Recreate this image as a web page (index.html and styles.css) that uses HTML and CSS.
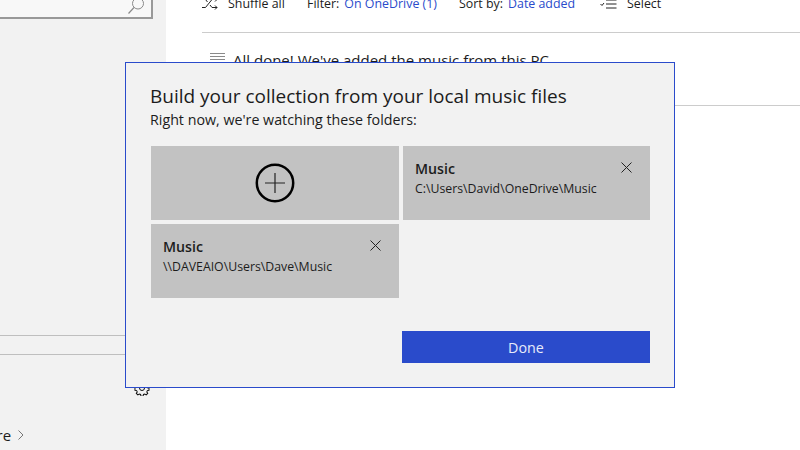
FILE: index.html
```html
<!DOCTYPE html>
<html lang="en">
<head>
<meta charset="utf-8">
<title>Music</title>
<link rel="stylesheet" href="styles.css">
</head>
<body>
<div class="app">
  <aside class="sidebar">
    <div class="search">
      <svg class="search-icon" viewBox="0 0 18 18" width="18" height="18"><circle cx="11" cy="6.500" r="5.500" fill="none" stroke="#8a8a8a" stroke-width="1"/><path d="M7 10.500L1.500 16.500" stroke="#8a8a8a" stroke-width="1.200" fill="none"/></svg>
    </div>
    <div class="side-fill"></div>
    <div class="side-line"></div>
    <div class="side-row">
      <svg class="gear" viewBox="0 0 16 16" width="16" height="16"><path d="M6.700 1h2.600l.4 2 1.500.7 1.800-1.100 1.800 1.800-1.100 1.800.6 1.500 2 .4v2.600l-2 .4-.6 1.500 1.100 1.800-1.800 1.800-1.800-1.100-1.500.6-.4 2H6.700l-.4-2-1.500-.6-1.800 1.100-1.800-1.800 1.100-1.800-.7-1.500-2-.4V7.100l2-.4.7-1.500-1.100-1.800 1.800-1.800 1.800 1.100 1.500-.7z" fill="none" stroke="#111" stroke-width="1.200" transform="translate(1.300 1.300) scale(.84)"/><circle cx="8" cy="8" r="2.500" fill="none" stroke="#111"/></svg>
    </div>
    <div class="store">
      <span>Store</span>
      <svg viewBox="0 0 6 10" width="6" height="10"><path d="M.5.500L5 5 .5 9.500" fill="none" stroke="#777" stroke-width="1"/></svg>
    </div>
  </aside>
  <main class="main">
    <div class="toolbar">
      <div class="tool tool-shuffle">
        <svg viewBox="0 0 16 14" width="16" height="14"><path d="M0 10.500h3.500L10 2.500h5M0 2.500h3.500l2 2.500M8 8l2 2.500h5M13 .5l2 2-2 2M13 8.500l2 2-2 2" fill="none" stroke="#222" stroke-width="1"/></svg>
        <span>Shuffle all</span>
      </div>
      <div class="tool tool-filter"><span>Filter:</span><span class="link">On OneDrive (1)</span></div>
      <div class="tool tool-sort"><span>Sort by:</span><span class="link">Date added</span></div>
      <div class="tool tool-select">
        <svg viewBox="0 0 17 10" width="17" height="10"><path d="M.5 5l1.500 1.500L4 4M6 1h10.500M6 5h10.500M6 9h10.500" fill="none" stroke="#222" stroke-width="1"/></svg>
        <span>Select</span>
      </div>
    </div>
    <div class="notice">
      <svg viewBox="0 0 16 14" width="16" height="14"><path d="M0 .5h15M0 3.500h15M0 6.500h15M0 9.500h9M0 12.500h9M11 12.500h4v-3" fill="none" stroke="#8a8a8a" stroke-width="1"/></svg>
      <span>All done! We've added the music from this PC</span>
    </div>
  </main>
</div>
<section class="dialog">
  <h1>Build your collection from your local music files</h1>
  <p class="sub">Right now, we're watching these folders:</p>
  <div class="grid">
    <button class="card add" type="button">
      <svg viewBox="0 0 40 40" width="40" height="40"><circle cx="20" cy="20" r="18.200" fill="none" stroke="#000" stroke-width="2.500"/><path d="M20 10v20M10 20h20" fill="none" stroke="#222" stroke-width="1.200"/></svg>
    </button>
    <div class="card">
      <div class="card-text"><strong>Music</strong><span>C:\Users\David\OneDrive\Music</span></div>
      <svg class="close" viewBox="0 0 11 11" width="11" height="11"><path d="M.5.500l10 10M10.500.500l-10 10" fill="none" stroke="#222" stroke-width="1"/></svg>
    </div>
    <div class="card">
      <div class="card-text"><strong>Music</strong><span>\\DAVEAIO\Users\Dave\Music</span></div>
      <svg class="close" viewBox="0 0 11 11" width="11" height="11"><path d="M.5.500l10 10M10.500.500l-10 10" fill="none" stroke="#222" stroke-width="1"/></svg>
    </div>
  </div>
  <div class="actions"><button class="done" type="button">Done</button></div>
</section>
</body>
</html>
```
FILE: styles.css
```css
* { box-sizing: border-box; }
html, body { margin: 0; height: 100%; overflow: hidden; background: #fff; }
body { font-family: "Open Sans", "Noto Sans", "Liberation Sans", sans-serif; color: #1c1c1c; font-size: 13px; }
.app { display: flex; height: 450px; }
.sidebar { width: 166px; background: #f2f2f2; display: flex; flex-direction: column; flex: none; padding-right: 13px; }
.search { height: 19px; background: #f8f8f8; border-right: 2px solid #999; border-bottom: 2px solid #999; display: flex; justify-content: flex-end; align-items: flex-end; padding: 0 6px 2px 0; }
.search-icon { flex: none; }
.side-fill { height: 317px; border-bottom: 1px solid #bfbfbf; }
.side-line { height: 19px; border-bottom: 1px solid #bfbfbf; }
.side-row { height: 68px; display: flex; justify-content: flex-end; padding: 25px 3px 0 0; }
.gear { flex: none; }
.store { display: flex; align-items: center; gap: 7px; margin-left: -26px; font-size: 15px; line-height: 24px; }
.main { flex: 1; padding: 0 0 0 36px; display: flex; flex-direction: column; }
.toolbar { height: 33px; border-bottom: 1px solid #ccc; display: flex; align-items: flex-end; padding-bottom: 18px; line-height: 20px; font-size: 12.400px; }
.tool { display: flex; align-items: center; gap: 5px; white-space: nowrap; }
.tool-shuffle { gap: 10px; width: 105px; }
.tool-filter { width: 152px; }
.tool-sort { width: 141px; }
.tool-select { gap: 10px; }
.link { color: #2a4bcb; }
.notice { display: flex; align-items: center; gap: 7px; margin-left: 8px; height: 72px; padding-bottom: 19px; font-size: 15px; white-space: nowrap; }
.main::after { content: ""; display: block; height: 1px; background: #ccc; }
.dialog { position: absolute; left: 125px; top: 62px; width: 550px; height: 326px; background: #f2f2f2; border: 1px solid #2a4bcb; padding: 20px 24px 0; }
h1 { margin: 0; font-size: 19px; font-weight: 400; line-height: 27px; white-space: nowrap; }
.sub { margin: 0; font-size: 14.250px; line-height: 20px; }
.grid { display: grid; grid-template-columns: 248px 247px; grid-auto-rows: 74px; gap: 4px; margin: 16px 0 0 1px; }
.card { background: #c2c2c2; border: 0; padding: 13px 18px 0 12px; display: flex; justify-content: space-between; align-items: flex-start; font: inherit; color: inherit; }
.card.add { padding: 0; align-items: center; justify-content: center; }
.card-text { display: flex; flex-direction: column; }
.card-text strong { font-size: 14.200px; font-weight: 600; line-height: 20px; }
.card-text span { font-size: 12.300px; line-height: 20px; }
.close { margin-top: 3px; flex: none; }
.actions { display: flex; justify-content: flex-end; margin-top: 33px; }
.done { width: 248px; height: 32px; background: #2a4bcb; color: #e8ecfa; border: 0; font: inherit; font-size: 14.300px; }
```
